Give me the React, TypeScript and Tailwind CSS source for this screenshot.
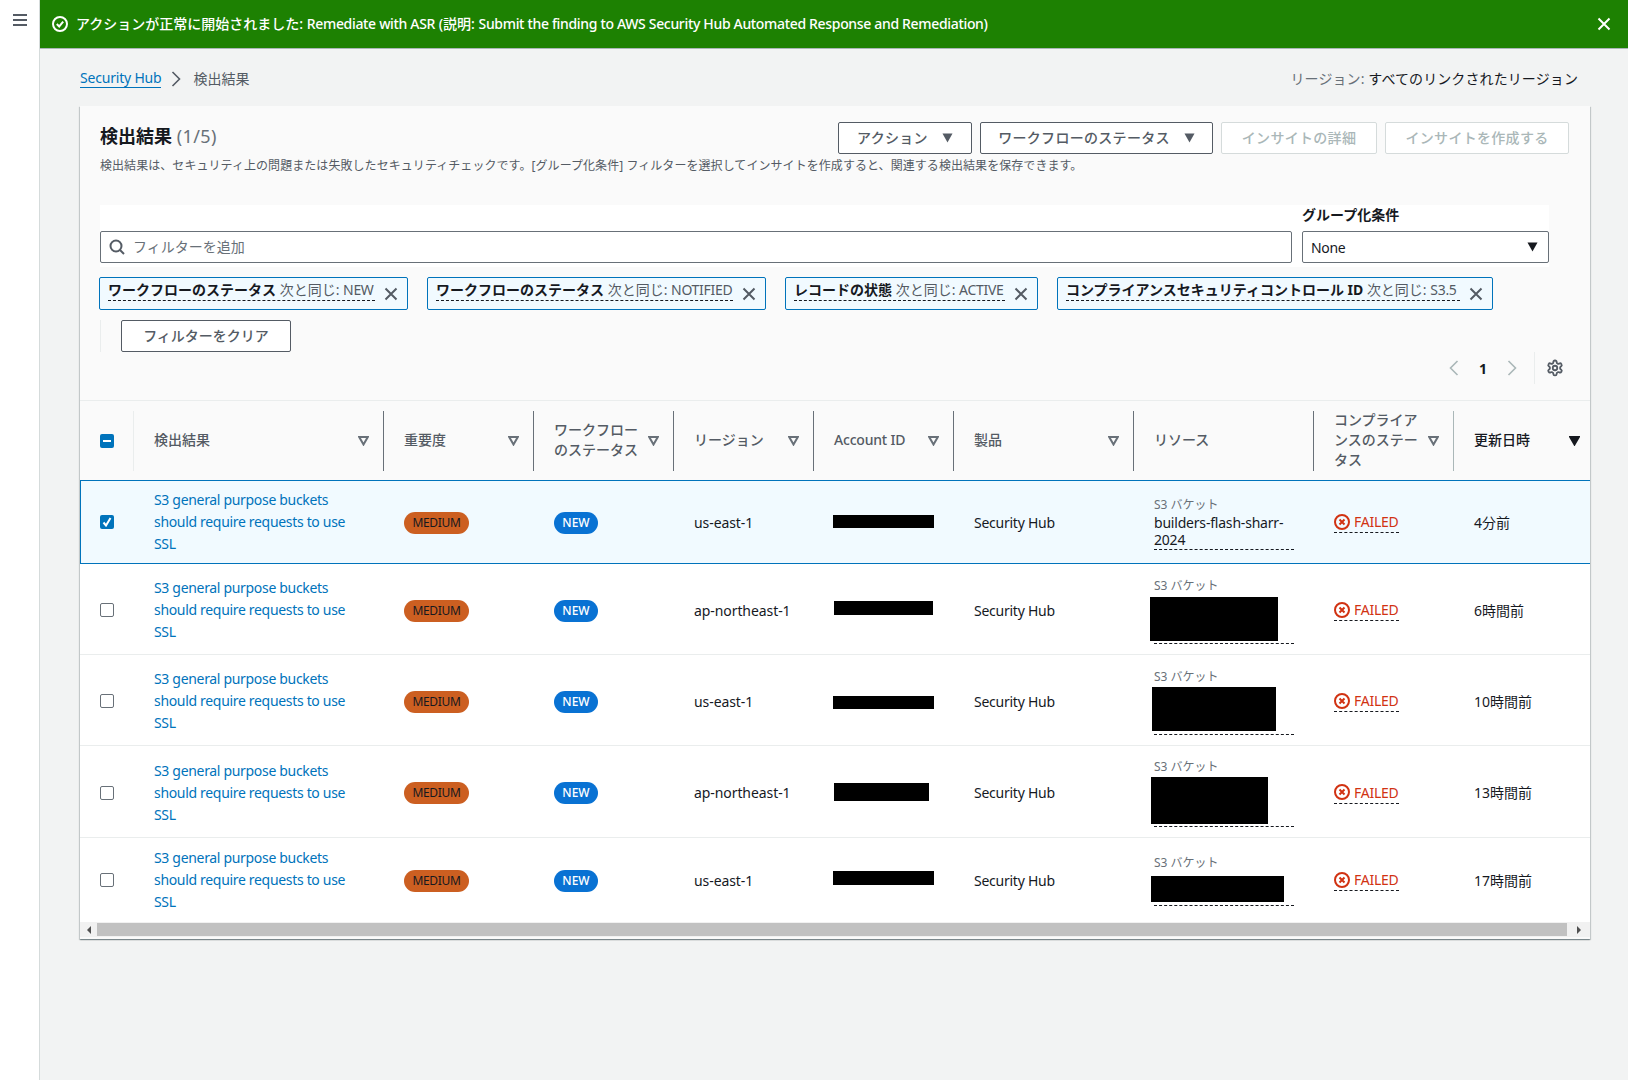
import React from 'react';

const XIcon = ({ s = 14, w = 2 }: { s?: number; w?: number }) => (
  <svg width={s} height={s} viewBox="0 0 14 14" fill="none" stroke="currentColor" strokeWidth={w}>
    <path d="M1.5 1.5 12.5 12.5M12.5 1.5 1.5 12.5" />
  </svg>
);
const Caret = () => (
  <svg width="11" height="10" viewBox="0 0 11 10" fill="currentColor"><path d="M0.5 0.5H10.5L5.5 9.5Z" /></svg>
);
const SortIcon = ({ active }: { active?: boolean }) => (
  <svg width="11" height="11" viewBox="0 0 11 11" fill={active ? '#16191f' : 'none'} stroke={active ? '#16191f' : '#687078'} strokeWidth="2" className={`shrink-0 ${active ? 'mr-[10px]' : 'mr-[14px]'}`}>
    <path d="M1.2 2H9.8L5.5 9.5Z" />
  </svg>
);
const Chevron = ({ left, cls }: { left?: boolean; cls: string }) => (
  <svg width="10" height="16" viewBox="0 0 10 16" fill="none" stroke="currentColor" strokeWidth="1.6" className={cls}>
    <path d={left ? 'M8.5 1 1.5 8l7 7' : 'M1.5 1l7 7-7 7'} />
  </svg>
);

const Btn = ({ w, label, caret, off }: { w: string; label: string; caret?: boolean; off?: boolean }) => (
  <div className={`${w} h-[32px] flex items-center justify-center gap-[14px] rounded-[2px] border text-[14px] font-medium tracking-[0.3px] bg-white ${off ? 'border-[#d5dbdb] text-[#aab7b8]' : 'border-[#545b64] text-[#545b64]'}`}>
    <span className="pb-[2px]">{label}</span>
    {caret && <Caret />}
  </div>
);

const Token = ({ w, k, v }: { w: string; k: string; v: string }) => (
  <div className={`${w} h-[33px] flex items-center justify-between pl-[8px] pr-[9px] rounded-[2px] border border-[#0073bb] bg-[#f1faff] text-[#16191f]`}>
    <div className="flex-1 min-w-0 whitespace-nowrap border-b border-dashed border-[#16191f] text-[14px] leading-[18px] mt-[-4px] mr-[9px]">
      <span className="relative top-[-1px]">
        <span className="font-bold">{k}</span> <span className="text-[#545b64]">次と同じ: <span className="tracking-[-0.3px]">{v}</span></span>
      </span>
    </div>
    <span className="text-[#545b64] shrink-0"><XIcon s={14} /></span>
  </div>
);

const cols = ['w-[54px]', 'w-[250px]', 'w-[150px]', 'w-[140px]', 'w-[140px]', 'w-[140px]', 'w-[180px]', 'w-[180px]', 'w-[140px]', 'flex-1'];

const Head = ({ w, label, sort = true, active }: { w: string; label: React.ReactNode; sort?: boolean; active?: boolean }) => (
  <div className={`${w} h-[60px] flex items-center justify-between pl-[20px] border-l ${active ? 'border-[#aab7b8]' : 'border-[#687078]'} shrink-0`}>
    <span className={`pb-[2px] text-[14px] leading-[20px] font-medium ${active ? 'text-[#16191f] font-bold' : 'text-[#545b64]'}`}>{label}</span>
    {sort && <SortIcon active={active} />}
  </div>
);

type Row = { h: string; pad: string; region: string; time: string; aw: number; al: number; ah: number; dy: number; pt: number; nameH: number; rect?: [number, number, number, number] };

const rows: Row[] = [
  { h: 'h-[84px]', pad: '', region: 'us-east-1', time: '4分前', aw: 101, al: -1, ah: 13, dy: -1, pt: 15, nameH: 36 },
  { h: 'h-[91px]', pad: 'pt-[2px]', region: 'ap-northeast-1', time: '6時間前', aw: 99, al: 0, ah: 14, dy: -2, pt: 11, nameH: 49, rect: [-4, 128, 2, 44] },
  { h: 'h-[91px]', pad: 'pt-[2px]', region: 'us-east-1', time: '10時間前', aw: 101, al: -1, ah: 13, dy: 1, pt: 11, nameH: 49, rect: [-2, 124, 1, 44] },
  { h: 'h-[92px]', pad: 'pt-[2px]', region: 'ap-northeast-1', time: '13時間前', aw: 95, al: 0, ah: 18, dy: -1, pt: 10, nameH: 51, rect: [-3, 117, 1, 47] },
  { h: 'h-[84px]', pad: '', region: 'us-east-1', time: '17時間前', aw: 101, al: -1, ah: 14, dy: -2, pt: 16, nameH: 34, rect: [-3, 133, 4, 26] },
];

const Failed = () => (
  <div className="inline-flex items-center gap-[4px] h-[22px] mt-[2px] border-b border-dashed border-[#16191f] text-[#d13212] text-[14px] tracking-[-0.25px]">
    <svg width="16" height="16" viewBox="0 0 16 16" fill="none" stroke="#d13212">
      <circle cx="8" cy="8" r="7" strokeWidth="2" />
      <path d="M5.5 5.5l5 5M10.5 5.5l-5 5" strokeWidth="2" />
    </svg>
    <span>FAILED</span>
  </div>
);

const TableRow = ({ r, i }: { r: Row; i: number }) => {
  const sel = i === 0;
  return (
    <div className={`${r.h} ${r.pad} flex items-center text-[14px] text-[#16191f] ${sel ? 'bg-[#f1faff] border-y border-l border-[#0073bb]' : i === 4 ? 'bg-white' : 'bg-white border-b border-[#eaeded]'}`}>
      <div className={`${sel ? 'w-[53px] pl-[19px]' : 'w-[54px] pl-[20px]'} shrink-0`}>
        {sel ? (
          <div className="w-[14px] h-[14px] rounded-[2px] bg-[#0073bb] flex items-center justify-center">
            <svg width="10" height="10" viewBox="0 0 10 10" fill="none" stroke="white" strokeWidth="2"><path d="M1.5 5.5 4 8.5 8.5 1" /></svg>
          </div>
        ) : (
          <div className="w-[14px] h-[14px] rounded-[2px] border border-[#687078] bg-white" />
        )}
      </div>
      <div className={`${cols[1]} shrink-0 pl-[20px] pr-[24px] text-[#0073bb] leading-[22px] tracking-[-0.32px]`}>S3 general purpose buckets should require requests to use SSL</div>
      <div className={`${cols[2]} shrink-0 pl-[20px]`}>
        <span className="inline-flex items-center justify-center w-[65px] h-[22px] rounded-full bg-[#cc5f21] text-[#16191f] text-[12px] tracking-[-0.3px]">MEDIUM</span>
      </div>
      <div className={`${cols[3]} shrink-0 pl-[20px]`}>
        <span className="inline-flex items-center justify-center w-[44px] h-[22px] rounded-full bg-[#0972d3] text-white text-[12px] font-medium">NEW</span>
      </div>
      <div className={`${cols[4]} shrink-0 pl-[20px] tracking-[-0.08px]`}>{r.region}</div>
      <div className={`${cols[5]} shrink-0 pl-[20px] relative`}>
        <div className="bg-black relative" style={{ width: r.aw, height: r.ah, marginLeft: r.al, top: r.dy }} />
      </div>
      <div className={`${cols[6]} shrink-0 pl-[20px] tracking-[-0.25px]`}>Security Hub</div>
      <div className={`${cols[7]} shrink-0 pl-[20px] pr-[20px] self-start`} style={{ paddingTop: r.pt }}>
        <div className="text-[12px] leading-[18px] text-[#687078]">S3 バケット</div>
        <div className="relative border-b border-dashed border-[#16191f] leading-[17px] tracking-[-0.2px]" style={{ height: r.nameH }}>
          {r.rect ? (
            <div className="absolute bg-black" style={{ left: r.rect[0], width: r.rect[1], top: r.rect[2], height: r.rect[3] }} />
          ) : (
            <>builders-flash-sharr-2024</>
          )}
        </div>
      </div>
      <div className={`${cols[8]} shrink-0 pl-[20px]`}><Failed /></div>
      <div className={`${cols[9]} pl-[20px]`}>{r.time}</div>
    </div>
  );
};

export default function App() {
  return (
    <div className="h-[1080px] flex bg-[#f2f3f3] font-['Noto_Sans','Noto_Sans_CJK_JP',sans-serif] text-[#16191f] overflow-hidden">
      <nav className="w-[40px] shrink-0 bg-white border-r border-[#d5dbdb] pt-[14px] pl-[13px]">
        <svg width="14" height="12" viewBox="0 0 14 12" stroke="#545b64" strokeWidth="2"><path d="M0 1h14M0 6h14M0 11h14" /></svg>
      </nav>
      <main className="flex-1 min-w-0">
        <div className="h-[49px] bg-[#1d8102] border-b border-[#aab7b8] flex items-center pl-[12px] pr-[17px] text-white text-[14px] font-medium">
          <svg width="16" height="16" viewBox="0 0 16 16" fill="none" stroke="white" strokeWidth="2"><circle cx="8" cy="8" r="7" /><path d="M4.8 8 7.2 10.4 11.2 5.6" /></svg>
          <span className="ml-[8px] flex-1 whitespace-nowrap pb-[2px]">アクションが正常に開始されました: <span className="tracking-[-0.33px]">Remediate with ASR</span> (説明: <span className="tracking-[-0.33px]">Submit the finding to AWS Security Hub Automated Response and Remediation)</span></span>
          <XIcon s={14} />
        </div>
        <div className="pl-[40px] pr-[38px]">
          <div className="h-[57px] pt-[2px] flex items-center justify-between text-[14px]">
            <div className="flex items-center">
              <span className="text-[#0073bb] border-b border-[#0073bb] leading-[18px] tracking-[-0.2px]">Security Hub</span>
              <Chevron cls="ml-[10px] mr-[12px] text-[#545b64]" />
              <span className="text-[#545b64]">検出結果</span>
            </div>
            <div className="mr-[12px] tracking-[0.1px]"><span className="text-[#687078]">リージョン: </span><span className="text-[#16191f]">すべてのリンクされたリージョン</span></div>
          </div>
          <section className="bg-[#fafafa] shadow-[0_1px_1px_0_rgba(0,28,36,0.3),1px_1px_1px_0_rgba(0,28,36,0.15),-1px_1px_1px_0_rgba(0,28,36,0.15)] h-[833px]">
            <div className="pl-[20px] pr-[21px] pt-[16px] flex justify-between">
              <h1 className="text-[18px] leading-[28px] font-bold">検出結果 <span className="font-normal text-[#687078] tracking-[0.4px]">(1/5)</span></h1>
              <div className="flex gap-[8px]">
                <Btn w="w-[134px]" label="アクション" caret />
                <Btn w="w-[233px]" label="ワークフローのステータス" caret />
                <Btn w="w-[156px]" label="インサイトの詳細" off />
                <Btn w="w-[184px]" label="インサイトを作成する" off />
              </div>
            </div>
            <p className="pl-[20px] text-[12px] leading-[18px] text-[#545b64] mt-[3px] tracking-[0.06px] whitespace-nowrap">検出結果は、セキュリティ上の問題または失敗したセキュリティチェックです。[グループ化条件] フィルターを選択してインサイトを作成すると、関連する検出結果を保存できます。</p>
            <div className="mx-[20px] mr-[41px] mt-[30px] h-[62px] bg-white flex gap-[10px]">
              <div className="flex-1 pt-[26px]">
                <div className="h-[32px] rounded-[2px] border border-[#687078] flex items-center pl-[8px] gap-[8px] text-[14px] text-[#687078]">
                  <svg width="16" height="16" viewBox="0 0 16 16" fill="none" stroke="#545b64" strokeWidth="2"><circle cx="7" cy="7" r="5.5" /><path d="M11 11l4 4" /></svg>
                  <span className="pb-[2px]">フィルターを追加</span>
                </div>
              </div>
              <div className="w-[247px] shrink-0">
                <div className="h-[26px] text-[14px] font-bold leading-[20px]">グループ化条件</div>
                <div className="h-[32px] rounded-[2px] border border-[#687078] flex items-center justify-between pl-[8px] pr-[10px] text-[14px]">
                  <span className="tracking-[-0.3px]">None</span>
                  <span className="text-[#16191f]"><Caret /></span>
                </div>
              </div>
            </div>
            <div className="pl-[19px] mt-[10px] flex gap-[19px]">
              <Token w="w-[309px]" k="ワークフローのステータス" v="NEW" />
              <Token w="w-[339px]" k="ワークフローのステータス" v="NOTIFIED" />
              <Token w="w-[253px]" k="レコードの状態" v="ACTIVE" />
              <Token w="w-[436px]" k="コンプライアンスセキュリティコントロール ID" v="S3.5" />
            </div>
            <div className="ml-[20px] mt-[10px] pl-[20px] border-l border-[#eaeded] h-[32px]">
              <div className="w-[170px] h-[32px] flex items-center justify-center rounded-[2px] border border-[#545b64] bg-white text-[14px] font-medium text-[#545b64] pb-[2px]">フィルターをクリア</div>
            </div>
            <div className="h-[48px]">
              <div className="h-[32px] flex items-center justify-end pr-[26px]">
                <Chevron left cls="text-[#aab7b8] mr-[20px]" />
                <span className="text-[14px] font-bold">1</span>
                <Chevron cls="text-[#aab7b8] ml-[20px] mr-[17px]" />
                <div className="w-[1px] h-[32px] bg-[#eaeded] mr-[11px]" />
                <svg width="18" height="18" viewBox="0 0 24 24" fill="none" stroke="#545b64" strokeWidth="2.4"><path d="M12.2 2h-.4a2 2 0 0 0-2 2v.2a2 2 0 0 1-1 1.7l-.4.3a2 2 0 0 1-2 0l-.2-.1a2 2 0 0 0-2.7.7l-.2.4a2 2 0 0 0 .7 2.7l.2.1a2 2 0 0 1 1 1.7v.5a2 2 0 0 1-1 1.7l-.2.1a2 2 0 0 0-.7 2.7l.2.4a2 2 0 0 0 2.7.7l.2-.1a2 2 0 0 1 2 0l.4.3a2 2 0 0 1 1 1.7v.2a2 2 0 0 0 2 2h.4a2 2 0 0 0 2-2v-.2a2 2 0 0 1 1-1.7l.4-.3a2 2 0 0 1 2 0l.2.1a2 2 0 0 0 2.7-.7l.2-.4a2 2 0 0 0-.7-2.7l-.2-.1a2 2 0 0 1-1-1.7v-.5a2 2 0 0 1 1-1.7l.2-.1a2 2 0 0 0 .7-2.7l-.2-.4a2 2 0 0 0-2.7-.7l-.2.1a2 2 0 0 1-2 0l-.4-.3a2 2 0 0 1-1-1.7V4a2 2 0 0 0-2-2Z" /><circle cx="12" cy="12" r="3" /></svg>
              </div>
            </div>
            <div className="h-[80px] border-t border-[#eaeded] flex items-center">
              <div className="w-[54px] shrink-0 flex h-[60px] items-center pl-[20px] border-r border-[#eaeded]">
                <div className="w-[14px] h-[14px] rounded-[2px] bg-[#0073bb] flex items-center justify-center"><div className="w-[8px] h-[2px] bg-white" /></div>
              </div>
              <div className="w-[249px] shrink-0 h-[60px] flex items-center justify-between pl-[20px] text-[14px] font-medium text-[#545b64]"><span className="pb-[2px]">検出結果</span><SortIcon /></div>
              <Head w={cols[2]} label="重要度" />
              <Head w={cols[3]} label={<>ワークフロー<br />のステータス</>} />
              <Head w={cols[4]} label="リージョン" />
              <Head w={cols[5]} label={<span className="tracking-[-0.2px]">Account ID</span>} />
              <Head w={cols[6]} label="製品" />
              <Head w={cols[7]} label="リソース" sort={false} />
              <Head w={cols[8]} label={<>コンプライア<br />ンスのステー<br />タス</>} />
              <Head w="flex-1" label="更新日時" active />
            </div>
            {rows.map((r, i) => <TableRow key={i} r={r} i={i} />)}
            <div className="h-[15px] bg-[#f1f1f1] flex items-center">
              <div className="w-[17px] flex justify-center"><svg width="4" height="8" viewBox="0 0 4 8" fill="#505050"><path d="M4 0v8L0 4z" /></svg></div>
              <div className="flex-1 h-[13px] bg-[#c1c1c1]" />
              <div className="w-[23px] flex justify-center"><svg width="4" height="8" viewBox="0 0 4 8" fill="#505050"><path d="M0 0v8l4-4z" /></svg></div>
            </div>
          </section>
        </div>
      </main>
    </div>
  );
}
